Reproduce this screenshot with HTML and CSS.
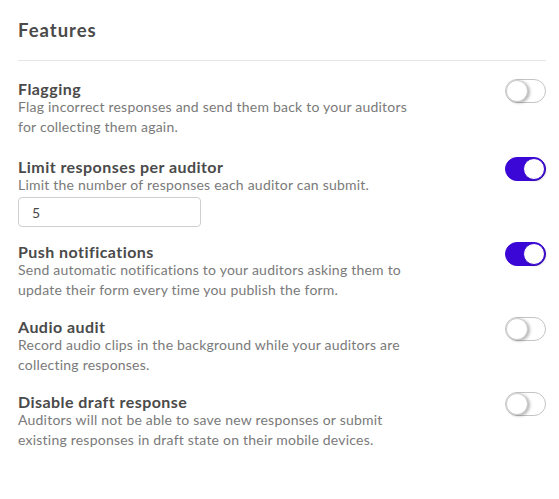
FILE: index.html
```html
<!DOCTYPE html>
<html>
<head>
<meta charset="utf-8">
<link rel="stylesheet" href="styles.css">
</head>
<body>
<div class="panel">
  <h2 class="heading">Features</h2>
  <div class="divider"></div>
  <div class="list">
    <div class="row row-first">
      <div class="text">
        <div class="title">Flagging</div>
        <div class="desc">Flag incorrect responses and send them back to your auditors for collecting them again.</div>
      </div>
      <span class="toggle"><span class="knob"></span></span>
    </div>
    <div class="row row-limit">
      <div class="text">
        <div class="title">Limit responses per auditor</div>
        <div class="desc">Limit the number of responses each auditor can submit.</div>
        <input class="field" type="text" value="5">
      </div>
      <span class="toggle on"><span class="knob"></span></span>
    </div>
    <div class="row">
      <div class="text">
        <div class="title">Push notifications</div>
        <div class="desc">Send automatic notifications to your auditors asking them to update their form every time you publish the form.</div>
      </div>
      <span class="toggle on"><span class="knob"></span></span>
    </div>
    <div class="row">
      <div class="text">
        <div class="title">Audio audit</div>
        <div class="desc">Record audio clips in the background while your auditors are collecting responses.</div>
      </div>
      <span class="toggle"><span class="knob"></span></span>
    </div>
    <div class="row">
      <div class="text">
        <div class="title">Disable draft response</div>
        <div class="desc">Auditors will not be able to save new responses or submit existing responses in draft state on their mobile devices.</div>
      </div>
      <span class="toggle"><span class="knob"></span></span>
    </div>
  </div>
</div>
</body>
</html>
```

FILE: styles.css
```css
* { box-sizing: border-box; }
html, body { margin: 0; padding: 0; background: #fff; }
body {
  font-family: Lato, "Noto Sans", "Liberation Sans", sans-serif;
  color: #4a4a4a;
}
.panel {
  width: 546px;
  padding: 20px 0 0 18px;
}
.heading {
  margin: 0;
  font-size: 18.5px;
  line-height: 20px;
  font-weight: 700;
  letter-spacing: 1px;
  color: #4a4a4a;
}
.divider {
  height: 1px;
  background: #e6e6e6;
  margin-top: 20px;
}
.list {
  display: flex;
  flex-direction: column;
  gap: 19px;
  padding-top: 20px;
}
.row {
  display: flex;
  justify-content: space-between;
  align-items: flex-start;
}
.row-first { margin-bottom: 3px; }
.row-limit { margin-bottom: -2px; }
.text {
  width: 400px;
  display: flex;
  flex-direction: column;
  align-items: flex-start;
}
.title {
  font-size: 16px;
  line-height: 16px;
  font-weight: 700;
  letter-spacing: 0.45px;
  color: #4a4a4a;
}
.desc {
  font-size: 14px;
  line-height: 20px;
  letter-spacing: 0.22px;
  color: #7a7a7a;
}
.field {
  margin-top: 2px;
  width: 183px;
  height: 30px;
  border: 1px solid #cfcfcf;
  border-radius: 4px;
  padding: 0 13px;
  font-family: Lato, "Noto Sans", sans-serif;
  font-size: 14px;
  color: #4a4a4a;
  outline: none;
}
.toggle {
  position: relative;
  flex: none;
  width: 41px;
  height: 24px;
  margin-top: -2px;
  border-radius: 12px;
  border: 1px solid #c4c4c4;
  background: #fff;
}
.toggle .knob {
  position: absolute;
  top: 0;
  left: 0;
  width: 22px;
  height: 22px;
  border-radius: 50%;
  background: #fff;
  border: 1px solid #cdcdcd;
  box-shadow: 2px 1px 3px rgba(0, 0, 0, 0.28);
}
.toggle.on {
  background: #3b07d6;
  border-color: #3b07d6;
}
.toggle.on .knob {
  left: auto;
  right: 0;
  border-color: #3b07d6;
  box-shadow: 1px 1px 2px rgba(0, 0, 0, 0.2);
}
```
